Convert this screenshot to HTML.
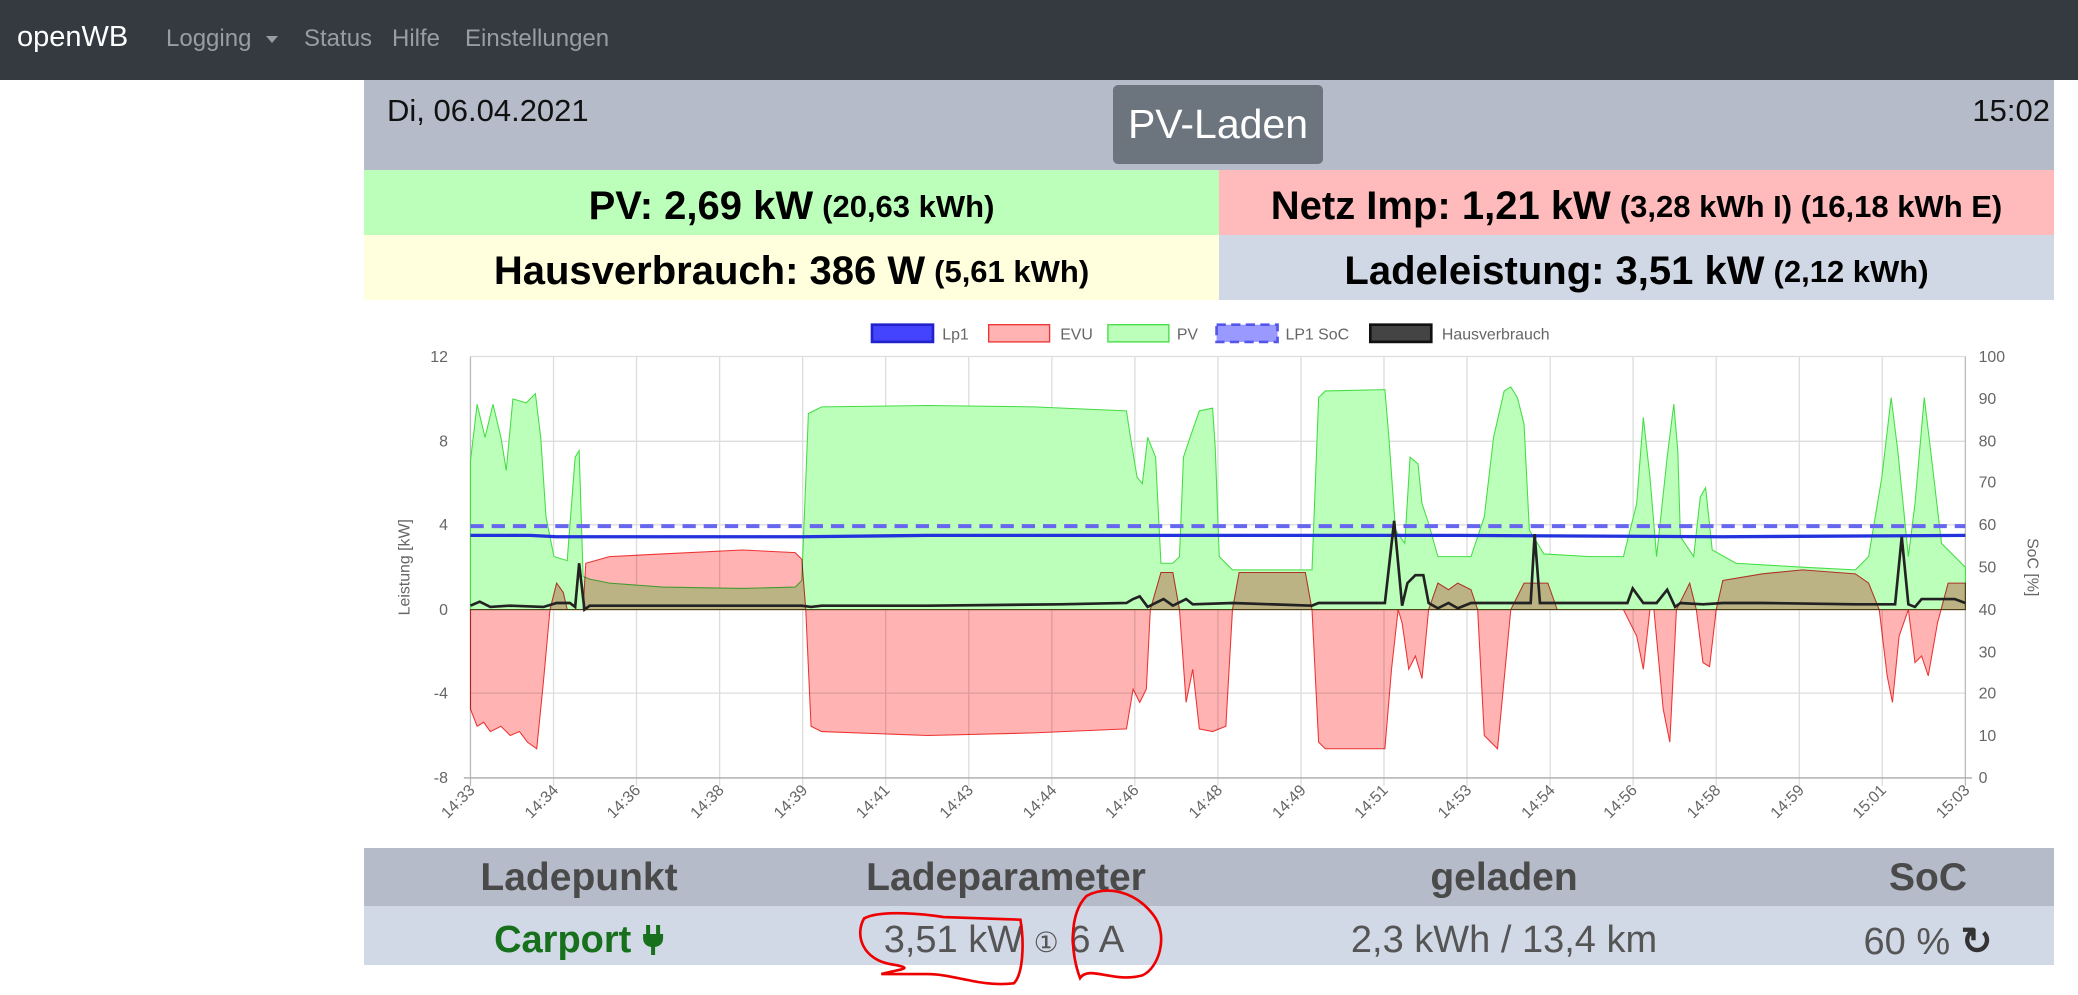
<!DOCTYPE html>
<html><head><meta charset="utf-8"><style>
*{margin:0;padding:0;box-sizing:border-box}
body{width:2078px;height:995px;overflow:hidden;background:#fff;font-family:"Liberation Sans",sans-serif;position:relative}
.a{position:absolute;white-space:nowrap}
.nav{left:0;top:0;width:2078px;height:80px;background:#343a40}
.nl{color:#9a9da0;font-size:24px;top:25px}
.row{height:65px;display:flex;align-items:center;justify-content:center;font-weight:bold;font-size:40px;color:#000;padding-top:8px}
.row small{font-size:31px;margin-left:9px}
.th{font-weight:bold;font-size:39px;color:#4a4a4a;transform:translateX(-50%);top:856px}
.td{font-size:38px;color:#555;transform:translateX(-50%);top:919px}
</style></head><body>
<div class="a nav"></div>
<div class="a" style="left:17px;top:21px;color:#fff;font-size:29px">openWB</div>
<div class="a nl" style="left:166px">Logging</div>
<div class="a" style="left:266px;top:36px;width:0;height:0;border-left:6px solid transparent;border-right:6px solid transparent;border-top:7px solid #9a9da0"></div>
<div class="a nl" style="left:304px">Status</div>
<div class="a nl" style="left:392px">Hilfe</div>
<div class="a nl" style="left:465px">Einstellungen</div>

<div class="a" style="left:364px;top:80px;width:1690px;height:90px;background:#b5bbc8"></div>
<div class="a" style="left:387px;top:93px;font-size:31px;color:#111">Di, 06.04.2021</div>
<div class="a" style="right:28px;top:93px;font-size:31px;color:#111">15:02</div>
<div class="a" style="left:1113px;top:85px;width:210px;height:79px;background:#6c757d;border-radius:5px;color:#fff;font-size:41px;text-align:center;line-height:79px">PV-Laden</div>

<div class="a row" style="left:364px;top:170px;width:855px;background:#bbffbb">PV: 2,69 kW<small>(20,63 kWh)</small></div>
<div class="a row" style="left:1219px;top:170px;width:835px;background:#ffbbbb">Netz Imp: 1,21 kW<small>(3,28 kWh I) (16,18 kWh E)</small></div>
<div class="a row" style="left:364px;top:235px;width:855px;background:#ffffdd">Hausverbrauch: 386 W<small>(5,61 kWh)</small></div>
<div class="a row" style="left:1219px;top:235px;width:835px;background:#d1d8e5">Ladeleistung: 3,51 kW<small>(2,12 kWh)</small></div>

<div class="a" style="left:364px;top:848px;width:1690px;height:58px;background:#b5bbc8"></div>
<div class="a" style="left:364px;top:906px;width:1690px;height:59px;background:#d1d8e6"></div>
<div class="a th" style="left:579px">Ladepunkt</div>
<div class="a th" style="left:1006px">Ladeparameter</div>
<div class="a th" style="left:1504px">geladen</div>
<div class="a th" style="left:1928px">SoC</div>
<div class="a td" style="left:579px;color:#17701c;font-weight:bold">Carport <svg width="22" height="30" viewBox="0 0 22 30" style="vertical-align:-3px"><rect x="4" y="0" width="4" height="9" fill="#17701c"/><rect x="14" y="0" width="4" height="9" fill="#17701c"/><path d="M1 9 H21 V13 C21 19 17 22 11 22 C5 22 1 19 1 13 Z" fill="#17701c"/><rect x="9" y="21" width="4" height="9" fill="#17701c"/></svg></div>
<div class="a td" style="left:1004px">3,51 kW <span style="font-size:28px">&#x2460;</span> 6 A</div>
<div class="a td" style="left:1504px">2,3 kWh / 13,4 km</div>
<div class="a td" style="left:1928px">60 % <b style="color:#333">&#x21BB;</b></div>

<svg class="a" style="left:0;top:0" width="2078" height="995" viewBox="0 0 1568 750.8" font-family="Liberation Sans,sans-serif">
<g stroke="#ddd" stroke-width="1">
<line x1="355" y1="269" x2="1483" y2="269"/><line x1="355" y1="333" x2="1483" y2="333"/><line x1="355" y1="396" x2="1483" y2="396"/><line x1="355" y1="460" x2="1483" y2="460"/><line x1="355" y1="523" x2="1483" y2="523"/>
<line x1="417.7" y1="269" x2="417.7" y2="593"/><line x1="480.3" y1="269" x2="480.3" y2="593"/><line x1="543" y1="269" x2="543" y2="593"/><line x1="605.7" y1="269" x2="605.7" y2="593"/><line x1="668.3" y1="269" x2="668.3" y2="593"/><line x1="731" y1="269" x2="731" y2="593"/><line x1="793.7" y1="269" x2="793.7" y2="593"/><line x1="856.3" y1="269" x2="856.3" y2="593"/><line x1="919" y1="269" x2="919" y2="593"/><line x1="981.7" y1="269" x2="981.7" y2="593"/><line x1="1044.3" y1="269" x2="1044.3" y2="593"/><line x1="1107" y1="269" x2="1107" y2="593"/><line x1="1169.7" y1="269" x2="1169.7" y2="593"/><line x1="1232.3" y1="269" x2="1232.3" y2="593"/><line x1="1295" y1="269" x2="1295" y2="593"/><line x1="1357.7" y1="269" x2="1357.7" y2="593"/><line x1="1420.3" y1="269" x2="1420.3" y2="593"/>
</g>
<line x1="355" y1="269" x2="355" y2="593" stroke="#bbb"/><line x1="1483" y1="269" x2="1483" y2="593" stroke="#bbb"/>
<line x1="350" y1="587" x2="1488" y2="587" stroke="#aaa"/>
<polygon fill="#bbffbb" stroke="#44dd44" stroke-width="0.8" points="355,348 360,305 366,330 372,305 378,330 382,355 387,301 397,304 404,297 408,330 412,390 418,420 428,423 434,345 437,340 440,435 445,437 460,440 500,443 560,444 600,443 605,438 610,312 620,307 700,306 780,307 850,310 853,330 858,360 862,365 866,330 872,345 876,425 885,425 890,420 893,345 898,330 905,310 915,308 917,338 920,420 930,430 990,430 995,300 1000,295 1045,294 1048,330 1053,400 1060,410 1064,345 1070,350 1073,380 1078,395 1085,420 1100,420 1110,420 1120,390 1127,330 1135,295 1140,292 1145,300 1150,320 1154,400 1165,418 1200,420 1225,420 1235,380 1240,315 1245,360 1250,420 1258,345 1263,305 1266,340 1268,405 1278,420 1283,375 1287,368 1292,415 1310,425 1360,428 1400,430 1410,420 1420,360 1427,300 1432,340 1440,420 1445,380 1452,300 1458,350 1465,410 1475,420 1483,428 1483,460 355,460"/>
<polygon fill="#ffb3b3" stroke="#ee3333" stroke-width="0.8" style="mix-blend-mode:multiply" points="355,460 355,535 360,548 365,545 370,552 378,548 385,555 392,552 398,560 405,565 410,515 415,460 420,440 425,447 428,460 440,460 442,425 460,420 500,418 560,415 600,417 605,422 608,460 612,548 620,552 700,555 780,553 850,550 855,520 860,530 865,520 868,460 876,432 885,432 890,460 895,530 900,505 905,550 915,552 925,548 930,460 935,432 985,432 990,460 995,560 1000,565 1045,565 1050,505 1055,460 1058,470 1063,505 1068,495 1073,512 1078,460 1085,440 1093,445 1100,440 1110,445 1115,460 1120,555 1130,565 1140,460 1150,440 1168,440 1175,460 1200,460 1225,460 1235,480 1240,505 1245,460 1248,460 1255,535 1260,560 1265,460 1275,440 1280,460 1285,500 1290,503 1295,460 1300,438 1330,433 1360,430 1400,433 1410,440 1418,460 1424,510 1428,530 1433,480 1440,460 1445,500 1450,495 1455,510 1462,470 1470,440 1483,440 1483,460"/>
<line x1="355" y1="397" x2="1483" y2="397" stroke="#6666ee" stroke-width="3" stroke-dasharray="10,6"/>
<polyline fill="none" stroke="#2233dd" stroke-width="2.5" points="355,404 400,404 420,405 480,405 605,405 700,404 900,404 1100,404 1300,405 1483,404"/>
<polyline fill="none" stroke="#222" stroke-width="2" points="355,457 362,454 370,458 385,457 410,458 420,455 430,455 434,458 437,425 441,460 445,457 605,457 612,458 620,457 700,457 800,456 850,455 855,452 860,450 866,458 872,455 878,452 885,457 895,452 900,456 930,455 990,457 995,455 1045,455 1052,393 1058,457 1062,440 1068,434 1074,434 1078,455 1085,459 1093,455 1100,459 1110,455 1120,455 1124,455 1130,455 1155,455 1158,403 1162,455 1200,455 1228,455 1232,444 1240,455 1250,455 1258,445 1264,458 1268,455 1285,456 1300,455 1330,455 1400,456 1430,456 1435,405 1440,456 1445,458 1450,452 1475,452 1483,455"/>
<g fill="#666" font-size="12" text-anchor="end">
<text x="338" y="273">12</text><text x="338" y="337">8</text><text x="338" y="400">4</text><text x="338" y="464">0</text><text x="338" y="527">-4</text><text x="338" y="591">-8</text>
</g>
<g fill="#666" font-size="12" text-anchor="start">
<text x="1493" y="273">100</text><text x="1493" y="305">90</text><text x="1493" y="337">80</text><text x="1493" y="368">70</text><text x="1493" y="400">60</text><text x="1493" y="432">50</text><text x="1493" y="464">40</text><text x="1493" y="496">30</text><text x="1493" y="527">20</text><text x="1493" y="559">10</text><text x="1493" y="591">0</text>
</g>
<text transform="translate(309,428) rotate(-90)" fill="#666" font-size="12" text-anchor="middle">Leistung [kW]</text>
<text transform="translate(1530,428) rotate(90)" fill="#666" font-size="12" text-anchor="middle">SoC [%]</text>
<g fill="#666" font-size="12" text-anchor="end">
<text transform="translate(359,597) rotate(-45)">14:33</text><text transform="translate(422,597) rotate(-45)">14:34</text><text transform="translate(484,597) rotate(-45)">14:36</text><text transform="translate(547,597) rotate(-45)">14:38</text><text transform="translate(610,597) rotate(-45)">14:39</text><text transform="translate(672,597) rotate(-45)">14:41</text><text transform="translate(735,597) rotate(-45)">14:43</text><text transform="translate(798,597) rotate(-45)">14:44</text><text transform="translate(860,597) rotate(-45)">14:46</text><text transform="translate(923,597) rotate(-45)">14:48</text><text transform="translate(986,597) rotate(-45)">14:49</text><text transform="translate(1048,597) rotate(-45)">14:51</text><text transform="translate(1111,597) rotate(-45)">14:53</text><text transform="translate(1174,597) rotate(-45)">14:54</text><text transform="translate(1236,597) rotate(-45)">14:56</text><text transform="translate(1299,597) rotate(-45)">14:58</text><text transform="translate(1362,597) rotate(-45)">14:59</text><text transform="translate(1424,597) rotate(-45)">15:01</text><text transform="translate(1487,597) rotate(-45)">15:03</text>
</g>
<g font-size="12" fill="#666">
<rect x="658" y="245" width="46" height="13" fill="#4444ff" stroke="#2222cc" stroke-width="2"/><text x="711" y="256">Lp1</text>
<rect x="746" y="245" width="46" height="13" fill="#ffb3b3" stroke="#ee3333"/><text x="800" y="256">EVU</text>
<rect x="836" y="245" width="46" height="13" fill="#bbffbb" stroke="#44dd44"/><text x="888" y="256">PV</text>
<rect x="918" y="245" width="46" height="13" fill="#9999ff" stroke="#5555ee" stroke-width="2" stroke-dasharray="7,4"/><text x="970" y="256">LP1 SoC</text>
<rect x="1034" y="245" width="46" height="13" fill="#444" stroke="#111" stroke-width="2"/><text x="1088" y="256">Hausverbrauch</text>
</g>
<g fill="none" stroke="#e00" stroke-width="2">
<path d="M652,693 C665,686 700,690 712,692 L770,694 C773,712 772,735 765,742 C740,745 720,735 700,735 L665,735 C680,731 690,731 675,728 C650,725 645,705 652,693 Z"/>
<path d="M820,676 C835,668 856,672 870,690 C882,705 875,730 862,736 C840,742 822,728 815,738 C808,720 806,690 820,676 Z"/>
</g>
</svg>
</body></html>
